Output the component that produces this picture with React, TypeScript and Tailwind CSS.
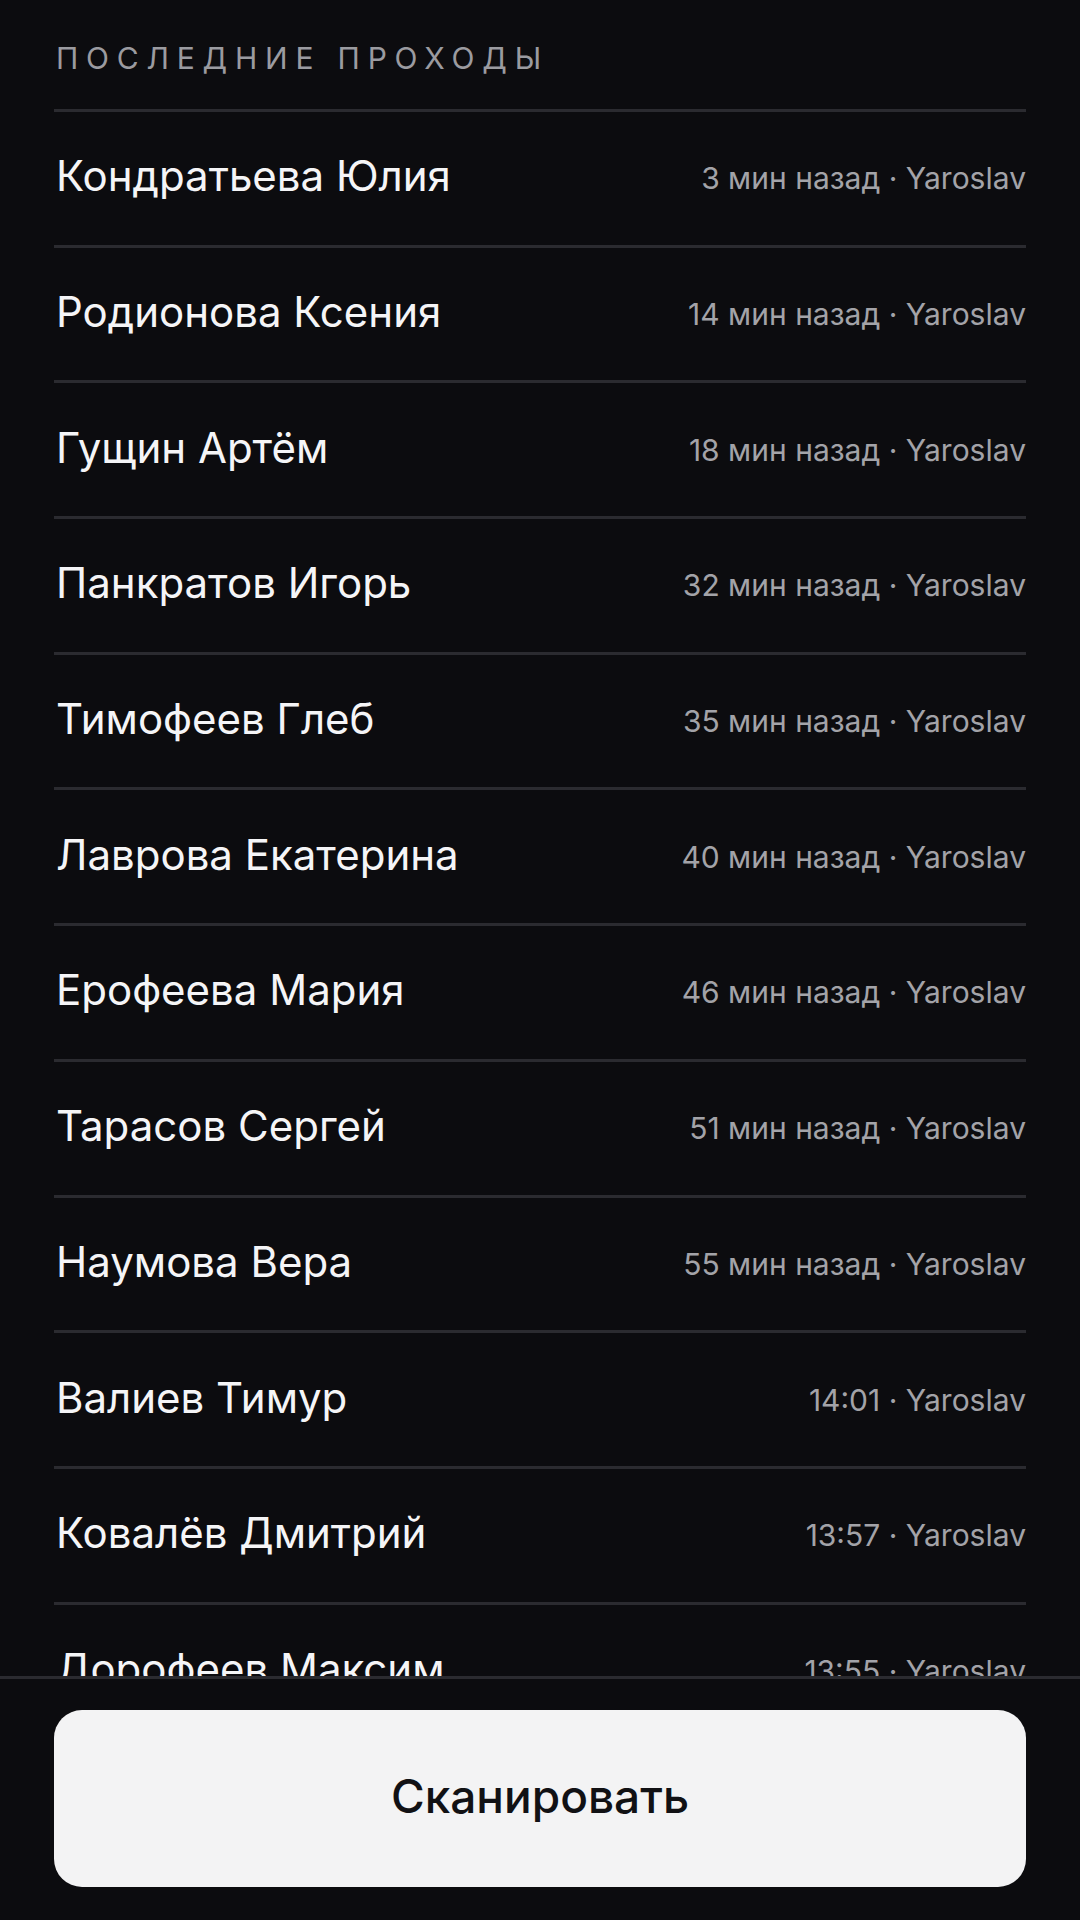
const rows: { name: string; time: string }[] = [
  { name: 'Кондратьева Юлия', time: '3 мин назад' },
  { name: 'Родионова Ксения', time: '14 мин назад' },
  { name: 'Гущин Артём', time: '18 мин назад' },
  { name: 'Панкратов Игорь', time: '32 мин назад' },
  { name: 'Тимофеев Глеб', time: '35 мин назад' },
  { name: 'Лаврова Екатерина', time: '40 мин назад' },
  { name: 'Ерофеева Мария', time: '46 мин назад' },
  { name: 'Тарасов Сергей', time: '51 мин назад' },
  { name: 'Наумова Вера', time: '55 мин назад' },
  { name: 'Валиев Тимур', time: '14:01' },
  { name: 'Ковалёв Дмитрий', time: '13:57' },
  { name: 'Дорофеев Максим', time: '13:55' },
  { name: 'Соколова Анна', time: '13:50' },
];

export default function App() {
  return (
    <div
      className="flex h-[1920px] w-[1080px] flex-col bg-[#0c0c0f] text-white"
      style={{ fontFamily: 'Inter, "Noto Sans", sans-serif' }}
    >
      {/* Recent passes list */}
      <div className="flex-1 overflow-hidden px-[54px]">
        <div className="flex h-[109px] items-start pl-[2px] pt-[40px]">
          <h2 className="text-[30px] leading-[36px] font-normal uppercase tracking-[0.26em] text-[#9b9ba0]">
            Последние проходы
          </h2>
        </div>
        {rows.map((row) => (
          <div
            key={row.name}
            className="flex h-[135.7px] items-center justify-between border-t-[3px] border-[#2b2b30] pl-[2px]"
          >
            <span className="mb-[4px] text-[42px] leading-none font-normal text-[#f5f5f7]">{row.name}</span>
            <span className="text-[30px] leading-none font-normal text-[#a3a3a8]">
              {row.time} · Yaroslav
            </span>
          </div>
        ))}
      </div>

      {/* Bottom action */}
      <div className="border-t-[3px] border-[#2b2b30] px-[54px] pt-[31px] pb-[33px]">
        <button className="flex h-[177px] w-full items-center justify-center rounded-[28px] bg-[#f3f3f4] pb-[4px] text-[46px] font-medium text-[#111114]">
          Сканировать
        </button>
      </div>
    </div>
  );
}
